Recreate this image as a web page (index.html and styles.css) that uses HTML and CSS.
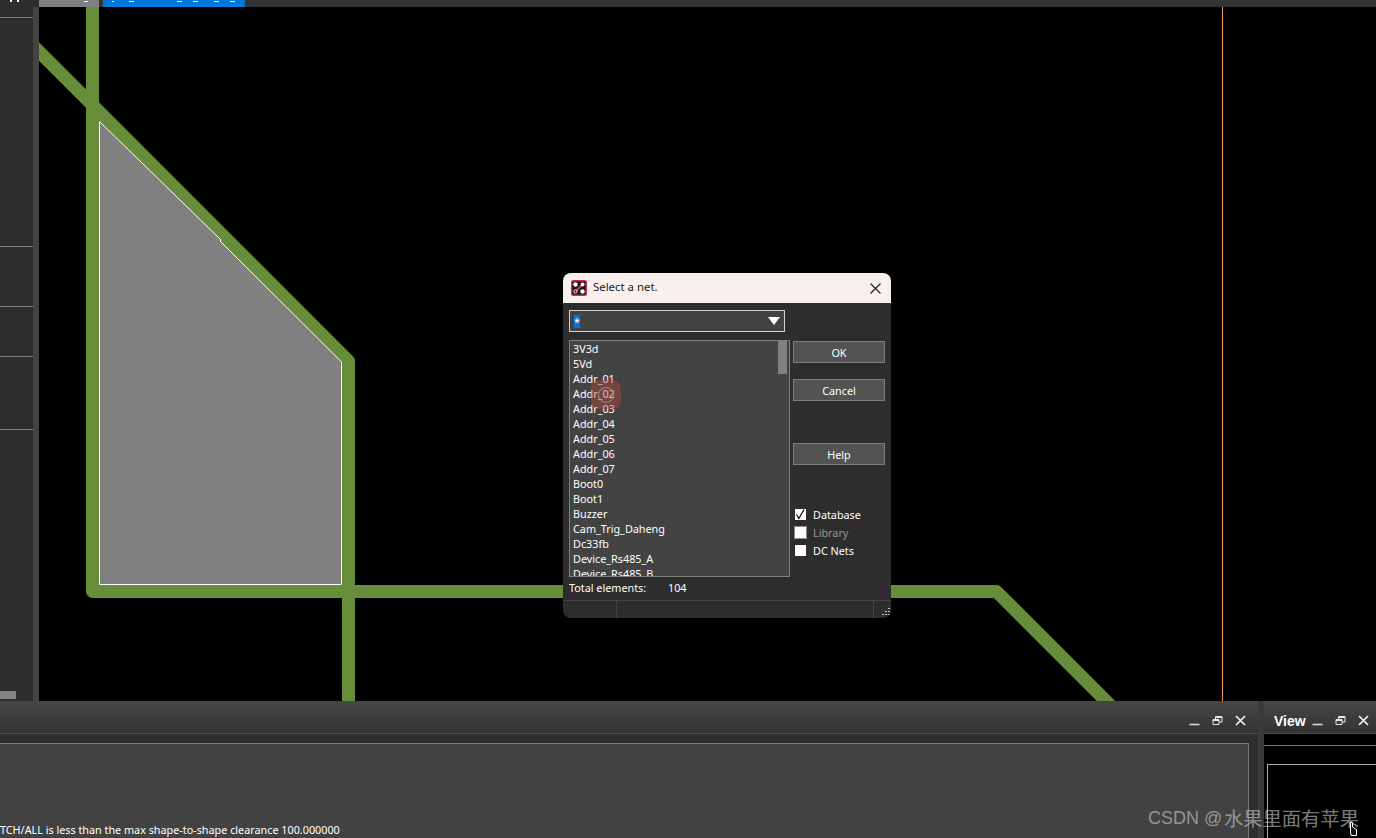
FILE: index.html
```html
<!DOCTYPE html>
<html lang="en">
<head>
<meta charset="utf-8">
<title>Select a net</title>
<link rel="stylesheet" href="styles.css">
</head>
<body>
<div class="app">
  <header class="topbar">
    <div class="tb-left"><svg class="tb-glyph" width="12" height="3" viewBox="0 0 12 3"><path d="M1 0l2 2M3 0L1 2M8 0l2 2M10 0L8 2" stroke="#fff" stroke-width="1" fill="none"/></svg></div>
    <div class="tb-tab"><i class="tick tick-tab"></i></div>
    <div class="tb-active">
      <i class="tick t1"></i><i class="tick t2"></i><i class="tick t3"></i><i class="tick t4"></i><i class="tick t5"></i><i class="tick t6"></i>
    </div>
  </header>

  <main class="main">
    <aside class="sidebar">
      <div class="sec sec-a"></div>
      <div class="sec sec-b"></div>
      <div class="sec sec-c"></div>
      <div class="sec sec-d"></div>
      <div class="sec sec-e"></div>
      <div class="sec sec-f"><div class="hthumb"></div></div>
    </aside>
    <div class="sash"></div>
    <div class="canvas">
      <svg class="board" viewBox="39 7 1337 694" width="1337" height="694">
        <path class="trace" d="M92.5 0V591.5H996.5L1130 725"/>
        <path class="trace" d="M20 32.500L348.500 361V720"/>
        <path class="shape" d="M99.500 121.500V584.500H341.500V362L220 241L221 240Z"/>
        <path class="ruler" d="M1222.500 7V701"/>
      </svg>

      <section class="dialog">
        <div class="dlg-title">
          <svg class="dlg-icon" width="16" height="16" viewBox="0 0 16 16">
            <rect x="0.750" y="0.750" width="14.500" height="14.500" rx="1.500" fill="#14141c" stroke="#cf2c48" stroke-width="1.500"/>
            <path d="M4.500 11.500L11.500 4.500" stroke="#e8304c" stroke-width="2"/>
            <circle cx="4.500" cy="4.500" r="2.200" fill="#fff"/>
            <circle cx="11.500" cy="4.500" r="2" fill="#fff"/>
            <circle cx="4.500" cy="11.500" r="1.600" fill="#14141c" stroke="#fff"/>
            <circle cx="11.500" cy="11.500" r="2.200" fill="#fff"/>
          </svg>
          <span class="dlg-name">Select a net.</span>
          <svg class="dlg-close" width="11" height="11" viewBox="0 0 11 11"><path d="M0.500 0.500L10.500 10.500M10.500 0.500L0.500 10.500" stroke="#222" stroke-width="1.200" fill="none"/></svg>
        </div>
        <div class="dlg-body">
          <div class="combo"><span class="combo-sel">*</span><span class="combo-arrow"></span></div>
          <div class="dlg-row">
            <div class="netlist">
              <ul class="nets">
                <li>3V3d</li><li>5Vd</li><li>Addr_01</li><li>Addr_02</li><li>Addr_03</li><li>Addr_04</li><li>Addr_05</li><li>Addr_06</li><li>Addr_07</li><li>Boot0</li><li>Boot1</li><li>Buzzer</li><li>Cam_Trig_Daheng</li><li>Dc33fb</li><li>Device_Rs485_A</li><li>Device_Rs485_B</li>
              </ul>
              <div class="vthumb"></div>
              <div class="clickmark"><svg width="18" height="18" viewBox="0 0 18 18"><circle cx="9" cy="9" r="7.500" fill="none" stroke="#9a9a9a" stroke-opacity=".6" stroke-width="1.400"/></svg></div>
            </div>
            <div class="side">
              <button class="btn btn-ok">OK</button>
              <button class="btn btn-cancel">Cancel</button>
              <button class="btn btn-help">Help</button>
              <div class="checks">
                <label class="check"><span class="box"><svg width="11" height="11" viewBox="0 0 11 11"><path d="M1.500 5.500L3.800 9.500L9 0.500" fill="none" stroke="#111" stroke-width="1.300"/></svg></span>Database</label>
                <label class="check check-off"><span class="box box-focus"></span>Library</label>
                <label class="check"><span class="box"></span>DC Nets</label>
              </div>
            </div>
          </div>
          <div class="total"><span class="total-label">Total elements:</span><span>104</span></div>
        </div>
        <footer class="status">
          <div class="st st-1"></div>
          <div class="st st-2"></div>
          <div class="st st-3"><svg width="10" height="10" viewBox="0 0 10 10"><path d="M7 1h2v1H7zM4 4h2v1H4zM7 4h2v1H7zM1 7h2v1H1zM4 7h2v1H4zM7 7h2v1H7z" fill="#bbb"/></svg></div>
        </footer>
      </section>
    </div>
  </main>

  <footer class="bottom">
    <section class="output">
      <div class="panel-head">
        <div class="controls">
          <svg class="ic" width="11" height="11" viewBox="0 0 11 11"><path d="M0.500 9.500H10.500" stroke="#ddd" stroke-width="1.500"/></svg>
          <svg class="ic" width="11" height="11" viewBox="0 0 11 11"><path d="M1 4.500H7V9.500H1ZM3.500 4V1.500H10V7H7M1 5.500H7M3.500 2.500H10" fill="none" stroke="#e8e8e8"/></svg>
          <svg class="ic" width="11" height="11" viewBox="0 0 11 11"><path d="M1 1L10 10M10 1L1 10" stroke="#f2f2f2" stroke-width="1.700"/></svg>
        </div>
      </div>
      <div class="output-wrap">
        <div class="output-box">
          <p class="output-msg">TCH/ALL is less than the max shape-to-shape clearance 100.000000</p>
        </div>
      </div>
    </section>
    <div class="bsash"></div>
    <section class="view">
      <div class="panel-head panel-head-view">
        <span class="view-title">View</span>
        <div class="controls">
          <svg class="ic" width="11" height="11" viewBox="0 0 11 11"><path d="M0.500 9.500H10.500" stroke="#ddd" stroke-width="1.500"/></svg>
          <svg class="ic" width="11" height="11" viewBox="0 0 11 11"><path d="M1 4.500H7V9.500H1ZM3.500 4V1.500H10V7H7M1 5.500H7M3.500 2.500H10" fill="none" stroke="#e8e8e8"/></svg>
          <svg class="ic" width="11" height="11" viewBox="0 0 11 11"><path d="M1 1L10 10M10 1L1 10" stroke="#f2f2f2" stroke-width="1.700"/></svg>
        </div>
      </div>
      <div class="view-body">
        <div class="view-extent"></div>
      </div>
    </section>
    <div class="watermark"><span class="wm-latin">CSDN @</span><span class="wm-cjk">水果里面有苹果</span></div>
    <svg class="cursor" width="9" height="15" viewBox="0 0 9 15"><path d="M1.500 0.500V10L2 13.500H7.500V7.500L3.500 5V0.500Z" fill="#111" stroke="#fff"/></svg>
  </footer>
</div>
</body>
</html>
```
FILE: styles.css
```css
* { box-sizing: border-box; }
html, body { margin: 0; height: 100%; background: #000; overflow: hidden; }
body { font-family: "Noto Sans", "Open Sans", "Liberation Sans", sans-serif; font-size: 10.800px; color: #fff; }

.app { width: 1376px; height: 838px; display: flex; flex-direction: column; position: relative; }

.topbar { height: 7px; flex: none; display: flex; background: #333; overflow: hidden; }
.tb-left { width: 39px; background: #2d2d2d; position: relative; }
.tb-glyph { display: block; margin-left: 9px; }
.tb-tab { width: 60px; background: #808080; position: relative; }
.tb-active { width: 142px; margin-left: 4px; background: #0078d7; position: relative; }
.tick { position: absolute; top: 1px; height: 1px; background: #fff; }
.tick-tab { left: 45px; width: 4px; }
.t1 { left: 9px; width: 2px; }
.t2 { left: 26px; width: 5px; }
.t3 { left: 74px; width: 5px; }
.t4 { left: 90px; width: 5px; }
.t5 { left: 111px; width: 5px; }
.t6 { left: 127px; width: 5px; }

.main { height: 694px; flex: none; display: flex; }
.sidebar { width: 33px; flex: none; background: #2d2d2d; display: grid; grid-template-rows: 3px 8px 229px 60px 50px 73px 1fr; }
.sec { border-bottom: 1px solid #808080; }
.sec-a { grid-row: 2; border-bottom-color: #7a7a7a; }
.sec-b { grid-row: 3; }
.sec-c { grid-row: 4; }
.sec-d { grid-row: 5; }
.sec-e { grid-row: 6; }
.sec-f { grid-row: 7; border-bottom: 0; display: flex; align-items: flex-end; padding-bottom: 2px; }
.hthumb { width: 16px; height: 8px; background: #858585; }
.sash { width: 6px; flex: none; background: #444; }

.canvas { flex: 1; background: #000; position: relative; overflow: hidden; }
.board { display: block; position: absolute; left: 0; top: 0; }
.trace { fill: none; stroke: #678c3a; stroke-width: 13; stroke-linejoin: round; }
.shape { fill: #808080; stroke: #fff; stroke-width: 1; }
.ruler { fill: none; stroke: #f29a52; stroke-width: 1; }

.dialog { position: absolute; left: 524px; top: 266px; width: 328px; height: 345px; background: #2d2d2d; border-radius: 8px; overflow: hidden; display: flex; flex-direction: column; }
.dlg-title { height: 30px; flex: none; background: #f8f0ed; color: #222; display: flex; align-items: center; padding: 0 10px 0 8px; }
.dlg-icon { display: block; flex: none; }
.dlg-name { margin-left: 6px; flex: 1; font-size: 11.400px; line-height: 14px; margin-top: -2px; }
.dlg-close { display: block; }
.dlg-body { flex: 1; padding: 7px 6px 0; }
.combo { width: 216px; height: 22px; border: 1px solid #d0d0d0; background: #434343; display: flex; align-items: center; justify-content: space-between; padding: 0 4px 0 4px; }
.combo-sel { background: #0078d7; width: 6px; height: 13px; line-height: 14px; text-align: center; }
.combo-arrow { width: 0; height: 0; border-left: 6px solid transparent; border-right: 6px solid transparent; border-top: 8px solid #fff; }
.dlg-row { display: flex; gap: 3px; margin-top: 8px; }
.netlist { width: 221px; height: 237px; border: 1px solid #7f7f7f; background: #434343; position: relative; overflow: hidden; }
.nets { list-style: none; margin: 0; padding: 0 0 0 3px; }
.nets li { height: 15px; line-height: 15px; white-space: nowrap; }
.vthumb { position: absolute; right: 2px; top: 0; width: 9px; height: 33px; background: #808080; }
.clickmark { position: absolute; left: 21px; top: 39px; width: 30px; height: 29px; border-radius: 8px; background: rgba(190, 70, 60, 0.4); display: flex; align-items: center; justify-content: center; }
.clickmark svg { display: block; }
.side { width: 92px; padding-top: 1px; }
.btn { display: block; width: 92px; height: 22px; padding: 0; background: #535353; border: 1px solid #7f7f7f; color: #fff; font: inherit; text-align: center; }
.btn-cancel { margin-top: 16px; }
.btn-help { margin-top: 42px; }
.checks { margin-top: 40px; }
.check { display: flex; align-items: center; height: 18px; padding-left: 2px; gap: 7px; }
.check-off { color: #9a9a9a; }
.box { width: 11px; height: 11px; background: #fff; display: block; flex: none; }
.box svg { display: block; }
.box-focus { box-shadow: 0 0 0 1px #8a8a8a; }
.total { display: flex; height: 14px; line-height: 14px; margin-top: 4px; }
.total-label { width: 99px; }
.status { height: 18px; flex: none; display: flex; border-top: 1px solid #444; }
.st { border-right: 1px solid #444; }
.st-1 { width: 54px; }
.st-2 { flex: 1; }
.st-3 { width: 17px; border-right: 0; display: flex; justify-content: flex-end; align-items: flex-end; padding: 0 0 1px; }

.bottom { height: 137px; flex: none; display: flex; position: relative; background: #2e2e2e; overflow: hidden; }
.output { width: 1258px; flex: none; display: flex; flex-direction: column; }
.panel-head { height: 33px; flex: none; background: linear-gradient(#464646, #333); border-bottom: 1px solid #4c4c4c; display: flex; align-items: center; justify-content: flex-end; padding: 6px 12px 0 0; }
.controls { display: flex; gap: 12px; }
.ic { display: block; }
.output-wrap { flex: 1; padding: 9px 9px 0 0; min-height: 0; display: flex; }
.output-box { flex: 1; background: #424242; border: 1px solid #7a7a7a; border-left: 0; border-bottom: 0; display: flex; align-items: flex-end; padding-bottom: 1px; }
.output-msg { margin: 0; height: 14px; line-height: 14px; white-space: nowrap; }
.bsash { width: 6px; flex: none; background: #3a3a3a; }
.view { flex: 1; display: flex; flex-direction: column; background: #000; min-width: 0; }
.panel-head-view { padding-left: 10px; padding-right: 7px; justify-content: space-between; }
.view-title { font-size: 14px; font-weight: 700; font-family: "Liberation Sans", sans-serif; margin-top: 2px; }
.view-body { flex: 1; border-top: 1px solid transparent; padding: 10px 0 0 3px; min-height: 0; }
.view-body::before { content: ""; display: block; height: 1px; background: #678c3a; margin-left: -3px; }
.view-extent { margin-top: 18px; height: 100px; border: 1px solid #b0b0b0; border-right: 0; }
.watermark { position: absolute; left: 1148px; top: 104px; height: 26px; line-height: 26px; color: rgba(205, 205, 205, 0.62); white-space: nowrap; display: flex; align-items: center; }
.wm-latin { font-family: "Liberation Sans", sans-serif; font-size: 18px; width: 76px; flex: none; }
.wm-cjk { font-family: "Noto Sans CJK SC", sans-serif; font-size: 19.300px; }
.cursor { position: absolute; left: 1349px; top: 121px; display: block; }
```
